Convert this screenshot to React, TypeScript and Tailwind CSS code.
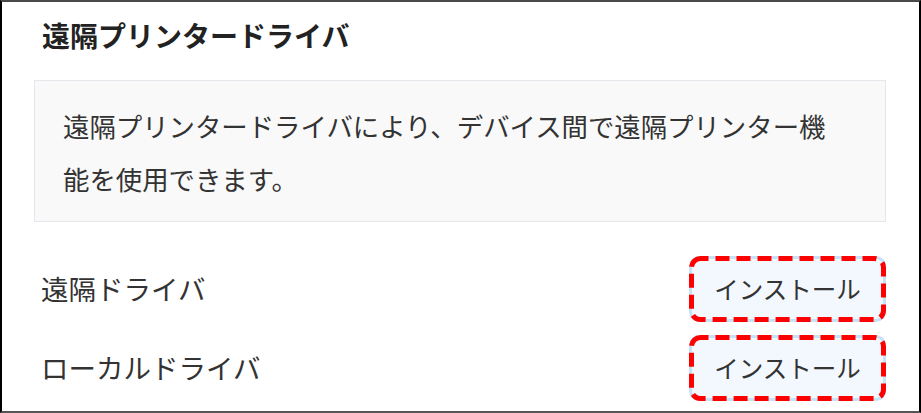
const font = { fontFamily: '"Noto Sans CJK JP", "Noto Sans", sans-serif' };

const drivers = [
  { id: "remote", label: "遠隔ドライバ" },
  { id: "local", label: "ローカルドライバ" },
];

function InstallButton() {
  return (
    <button
      type="button"
      className="relative flex h-[66px] w-[197px] items-center justify-center rounded-[10px] border-[3px] border-[#c6e2f6] bg-[#f2f8fd] text-[24.5px] text-[#333]"
    >
      インストール
      {/* red dashed callout drawn over the button */}
      <svg
        className="pointer-events-none absolute -top-[3px] -left-[3px]"
        width="197"
        height="66"
        viewBox="0 0 197 66"
        aria-hidden
      >
        <rect
          x="2.5"
          y="2.5"
          width="192"
          height="61"
          rx="9"
          fill="none"
          stroke="#ff0000"
          strokeWidth="5"
          strokeDasharray="14 7"
          strokeDashoffset="6"
        />
      </svg>
    </button>
  );
}

export default function App() {
  return (
    <div
      style={font}
      className="flex h-[413px] w-[921px] flex-col border-2 border-t-[#4a4a4a] border-r-black border-b-[#555] border-l-black bg-white pr-[33px] pl-8 text-[#333]"
    >
      <h2 className="mt-[13px] pl-[8px] text-[28px] leading-[40px] font-bold text-[#222]">
        遠隔プリンタードライバ
      </h2>

      <div className="mt-[25px] h-[142px] border border-[#e3e6ea] bg-[#f9f9f9] pt-[18px] pr-[40px] pl-[28px]">
        <p className="text-[26.4px] leading-[53px]">
          遠隔プリンタードライバにより、デバイス間で遠隔プリンター機能を使用できます。
        </p>
      </div>

      <ul className="mt-[34px] flex flex-col gap-[13px]">
        {drivers.map((d) => (
          <li key={d.id} className="flex items-center justify-between">
            <span className="pl-[7px] text-[27.5px]">{d.label}</span>
            <InstallButton />
          </li>
        ))}
      </ul>
    </div>
  );
}
